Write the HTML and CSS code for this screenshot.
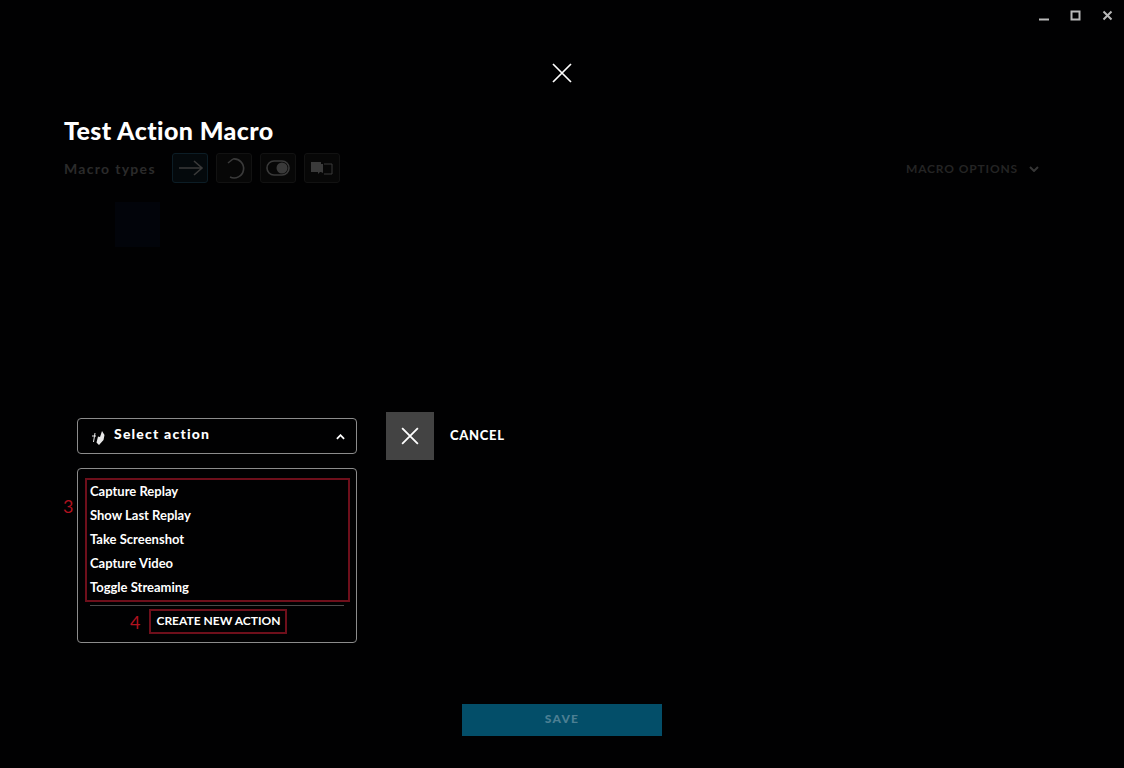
FILE: index.html
```html
<!DOCTYPE html>
<html lang="en">
<head>
<meta charset="utf-8">
<title>Test Action Macro</title>
<link rel="stylesheet" href="styles.css">
</head>
<body>
<div class="window">
  <div class="winbar">
    <svg class="winicon" viewBox="0 0 12 12"><path d="M1 9.500h10" /></svg>
    <svg class="winicon" viewBox="0 0 12 12"><rect x="1.500" y="1.500" width="8" height="8" /></svg>
    <svg class="winicon" viewBox="0 0 12 12"><path d="M1.500 1.500l8 8M9.500 1.500l-8 8" /></svg>
  </div>
  <div class="closerow">
    <svg class="closeicon" viewBox="0 0 20 20"><path d="M1 1l18 18M19 1L1 19" /></svg>
  </div>
  <h1 class="title">Test Action Macro</h1>
  <div class="typesrow">
    <span class="typeslabel">Macro types</span>
    <span class="typebtn typebtn-active"><svg viewBox="0 0 34 28"><path d="M6 14h23M21 7l8 7-8 7" /></svg></span>
    <span class="typebtn"><svg viewBox="0 0 34 28"><path d="M16 5a9.500 9.500 0 1 1-3 18M11 9l5-4" /></svg></span>
    <span class="typebtn"><svg viewBox="0 0 34 28"><rect x="6" y="7" width="22" height="14" rx="7" /><circle class="fill" cx="21" cy="14" r="5.500" /></svg></span>
    <span class="typebtn"><svg viewBox="0 0 34 28"><path class="fill" d="M6 8h10v2h2v9l-2-1h-1l-2 2v-2H6z" /><path class="thin" d="M19 10h8v10h-8" /></svg></span>
    <span class="options">MACRO OPTIONS<svg class="optchev" viewBox="0 0 10 6"><path d="M1 1l4 4 4-4" /></svg></span>
  </div>
  <div class="editor">
    <div class="ghost">
      <div class="ghosttile"></div>
    </div>
    <div class="actionrow">
      <div class="selectcol">
        <div class="select">
          <svg class="selecticon" viewBox="0 0 14 14"><path class="thin" d="M4 2L2.500 11M1 5h4" /><path class="solid" d="M11 0l2.500 4-1 5L8 14 5.500 11.500 7 5.500 9 6z" /></svg>
          <span class="selectlabel">Select action</span>
          <svg class="selectchev" viewBox="0 0 10 6"><path d="M1 5l4-4 4 4" /></svg>
        </div>
        <div class="menu">
          <ul class="menulist">
            <li>Capture Replay</li>
            <li>Show Last Replay</li>
            <li>Take Screenshot</li>
            <li>Capture Video</li>
            <li>Toggle Streaming</li>
            <li class="mark mark3">3</li>
          </ul>
          <div class="menufoot">
            <span class="mark">4</span>
            <span class="createbtn">CREATE NEW ACTION</span>
          </div>
        </div>
      </div>
      <div class="cancelgroup">
        <span class="cancelbox"><svg viewBox="0 0 16 16"><path d="M1 1l14 14M15 1L1 15" /></svg></span>
        <span class="canceltext">CANCEL</span>
      </div>
    </div>
  </div>
  <div class="savewrap"><span class="save">SAVE</span></div>
</div>
</body>
</html>
```
FILE: styles.css
```css
* { box-sizing: border-box; }
html, body { margin: 0; height: 100%; background: #000; }
body { font-family: "Lato", "Liberation Sans", sans-serif; color: #fff; overflow: hidden; }
.window { width: 1124px; height: 768px; display: flex; flex-direction: column; background: #010102; }
.winbar { display: flex; justify-content: flex-end; align-items: center; gap: 20px; height: 32px; padding: 0 10px 0 0; flex: none; }
.winicon { width: 12px; height: 12px; fill: none; stroke: #b9b9b9; stroke-width: 2; }
.closerow { display: flex; justify-content: center; height: 32px; flex: none; }
.closeicon { width: 20px; height: 20px; margin-top: 31px; fill: none; stroke: #fff; stroke-width: 1.7; overflow: visible; }
.title { margin: 49px 0 0 64px; font-size: 25px; line-height: 34px; font-weight: 900; letter-spacing: 0.4px; flex: none; }
.typesrow { display: flex; align-items: center; margin: 5px 85px 0 64px; height: 32px; flex: none; gap: 16px; }
.typeslabel { font-size: 14px; font-weight: 700; letter-spacing: 1.3px; color: #2b2b2b; width: 92px; white-space: nowrap; }
.typebtn { width: 36px; height: 30px; border: 1px solid #121212; border-radius: 3px; background: #070707; flex: none; margin-right: -8px; }
.typebtn-active { border-color: #0c1d26; background: #04090c; }
.typebtn svg { display: block; width: 34px; height: 28px; fill: none; stroke: #3a3a3a; stroke-width: 1.6; }
.typebtn svg .fill { fill: #3a3a3a; stroke: none; }
.typebtn svg .thin { stroke-width: 1; }
.options { margin-left: auto; display: flex; align-items: center; gap: 11px; font-size: 12px; font-weight: 700; letter-spacing: 0.85px; color: #242424; }
.optchev { width: 10px; height: 6px; margin-top: 2px; fill: none; stroke: #363636; stroke-width: 2; }
.editor { position: relative; flex: none; height: 520px; display: flex; flex-direction: column; }
.ghost { height: 228px; padding: 18px 0 0 115px; flex: none; }
.ghosttile { width: 45px; height: 45px; background: #02040a; }
.actionrow { display: flex; align-items: flex-start; gap: 29px; padding-left: 77px; }
.selectcol { width: 280px; display: flex; flex-direction: column; gap: 14px; padding-top: 6px; }
.select { height: 36px; border: 1px solid #8c8c8c; border-radius: 4px; display: flex; align-items: center; padding: 0 11px 0 13px; }
.selecticon { width: 14px; height: 14px; margin-top: 3px; }
.selecticon .thin { fill: none; stroke: #e8e8e8; stroke-width: 1; }
.selecticon .solid { fill: #e8e8e8; }
.selectlabel { margin-left: 9px; font-size: 14px; font-weight: 900; letter-spacing: 1.2px; margin-top: -5px; }
.selectchev { margin-left: auto; width: 9px; height: 6px; margin-top: 1px; fill: none; stroke: #fff; stroke-width: 2; }
.menu { height: 175px; border: 1px solid #8c8c8c; border-radius: 4px; padding: 9px 6px 0 7px; }
.menulist { position: relative; list-style: none; margin: 0; padding: 0 0 0 3px; height: 124px; border: 2px solid #6e0f1b; }
.menulist li { font-size: 13px; line-height: 22px; font-weight: 700; height: 24px; white-space: nowrap; }
.menulist li.mark3 { position: absolute; left: -24px; top: 14px; line-height: 24px; }
.menulist li.mark, .mark { font-size: 18px; font-weight: 400; color: #b0121f; line-height: 24px; }
.menufoot { display: flex; align-items: center; gap: 9px; margin: 3px 6px 0 5px; padding: 3px 0 0 40px; border-top: 1px solid #4a4a4a; }
.createbtn { height: 25px; border: 2px solid #6e0f1b; padding: 0 5px; font-size: 12px; line-height: 19px; font-weight: 700; white-space: nowrap; }
.cancelgroup { display: flex; align-items: center; gap: 16px; }
.cancelbox { width: 48px; height: 48px; background: #434343; display: flex; align-items: center; justify-content: center; }
.cancelbox svg { width: 18px; height: 18px; fill: none; stroke: #fff; stroke-width: 1.6; }
.canceltext { font-size: 13px; font-weight: 900; letter-spacing: 0.7px; margin-top: -3px; }
.savewrap { display: flex; justify-content: center; flex: none; }
.save { width: 200px; height: 32px; background: #034e69; color: #4c7f93; font-size: 12px; line-height: 30px; text-align: center; font-weight: 900; letter-spacing: 1.2px; }
```
